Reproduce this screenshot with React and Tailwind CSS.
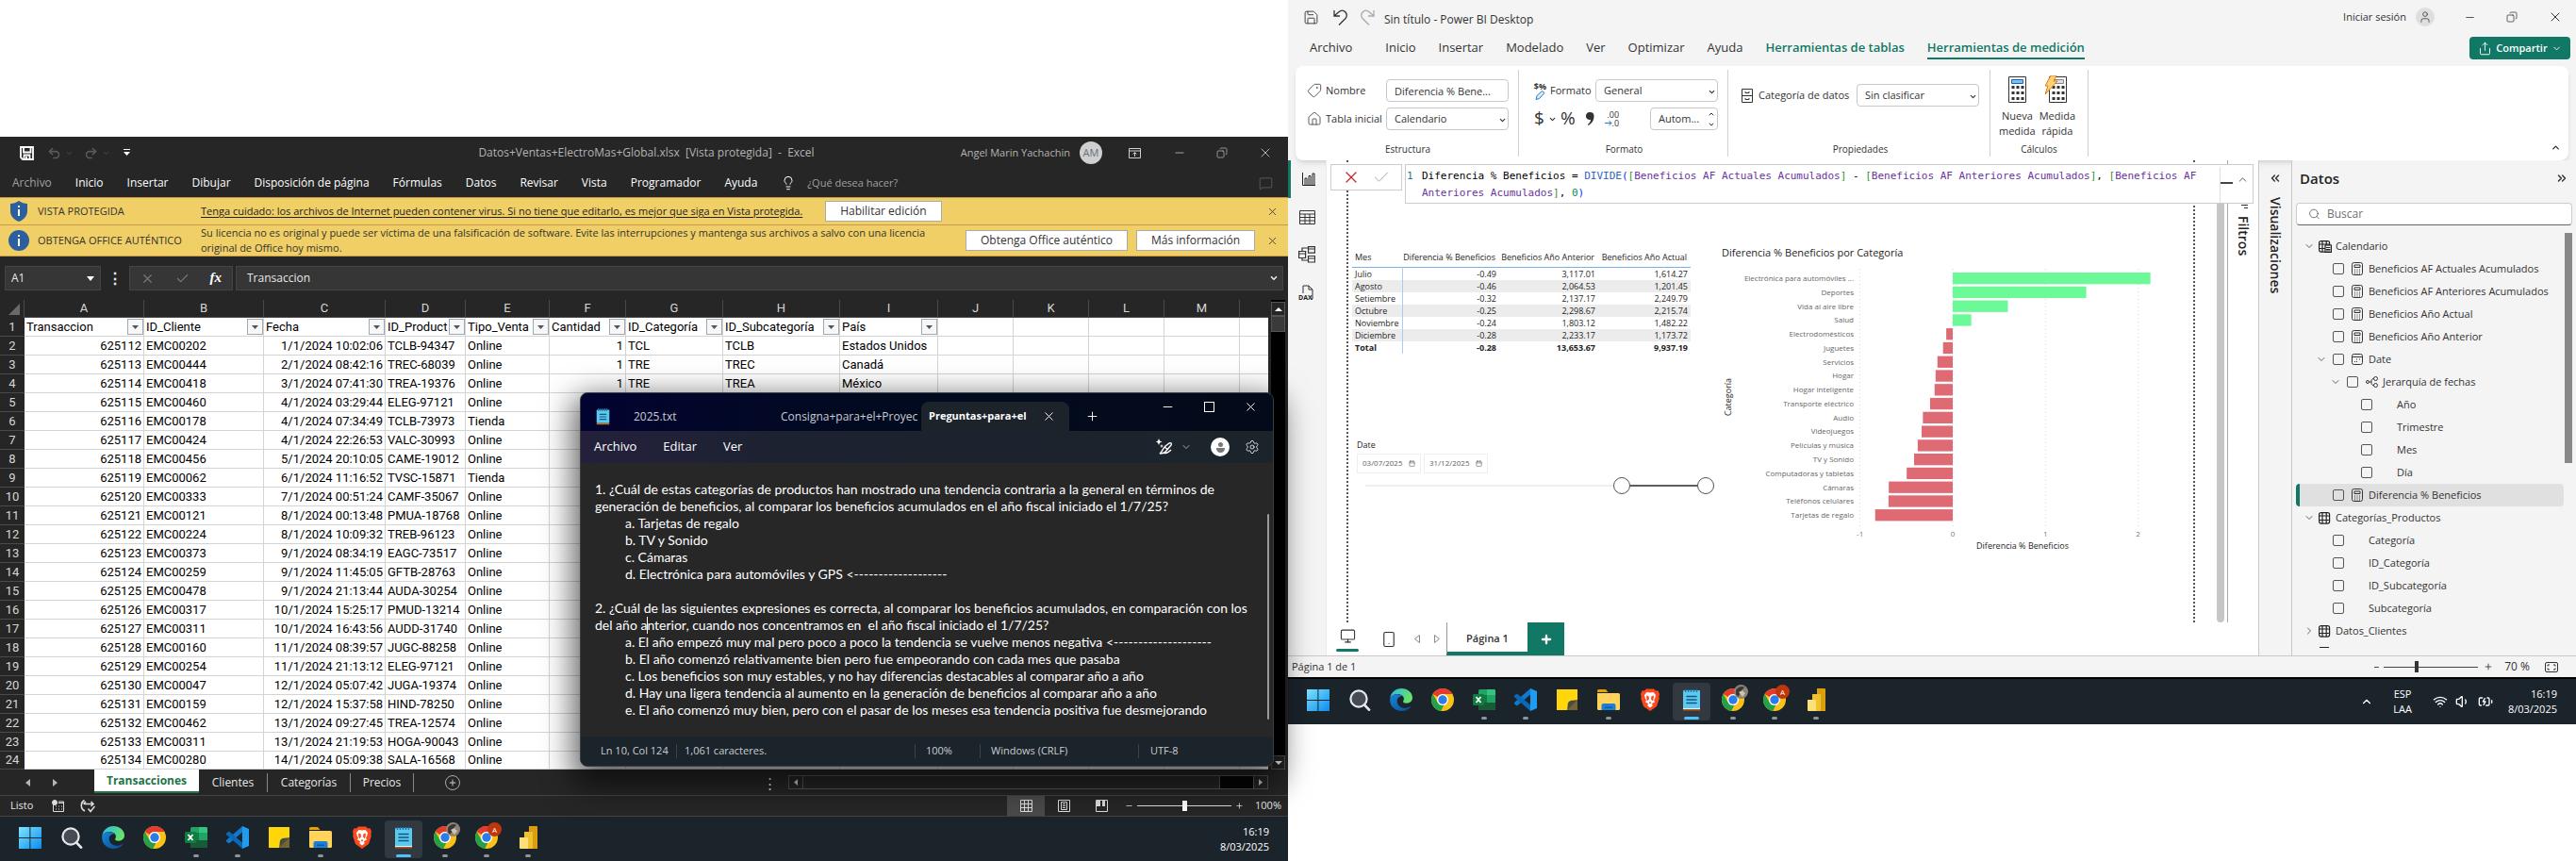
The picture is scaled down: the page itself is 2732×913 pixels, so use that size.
import React from 'react';
import {
  ChevronDown, ChevronUp, ChevronRight, X, Minus, Plus, Search, Save, Undo2, Redo2, Lightbulb,
  MessageSquare, Check, Settings, Home, Tag, Share, Wifi, Volume1, BatteryCharging, Copy,
  ChevronsLeft, ChevronsRight, Monitor, Smartphone, User, Calendar,
} from 'lucide-react';

/* ---------- task bar ---------- */

const svg24 = { width: 24, height: 24, viewBox: '0 0 24 24' };

const WindowsIcon = () => (
  <svg {...svg24}>
    <defs>
      <linearGradient id="win" x1="0" y1="0" x2="1" y2="1">
        <stop offset="0" stopColor="#7ee6ff" />
        <stop offset="1" stopColor="#0a8cf0" />
      </linearGradient>
    </defs>
    <path fill="url(#win)" d="M0 1h11.4v10.9H0zM12.4 1H24v10.9H12.4zM0 12.9h11.4V24H0zM12.4 12.9H24V24H12.4z" />
  </svg>
);

const LensIcon = () => (
  <svg {...svg24}>
    <circle cx="11" cy="11" r="8.6" fill="#464c54" stroke="#e6e8ea" strokeWidth="2.2" />
    <path d="M17.2 17.6 22 22.6" stroke="#e6e8ea" strokeWidth="2.8" strokeLinecap="round" />
  </svg>
);

const EdgeIcon = () => (
  <svg {...svg24}>
    <defs>
      <linearGradient id="edgeTop" x1="0" y1="0" x2="1" y2="0.4">
        <stop offset="0" stopColor="#2cb5ee" />
        <stop offset="1" stopColor="#66e36a" />
      </linearGradient>
      <linearGradient id="edgeLow" x1="0" y1="0" x2="1" y2="1">
        <stop offset="0" stopColor="#1686d9" />
        <stop offset="1" stopColor="#0b4c93" />
      </linearGradient>
    </defs>
    <path fill="url(#edgeTop)" d="M.3 10.5C1 4.200 6 0 12.200 0 19 0 24 4.600 24 9.800c0 3.500-2.700 5.900-6.200 5.900-2.600 0-3.800-.9-3.800-1.700 0-.6.900-1.100.9-2.900 0-2.600-2.700-5-6.600-5C4.200 6.100 1.300 8.200.3 10.500z" />
    <path fill="url(#edgeLow)" d="M.2 11.200C.6 8.300 4 6.200 8 6.200c2.400 0 4.300.8 5.500 2-3.400-.4-5.800 2-5.800 5.300 0 4 3.700 7.300 8.200 7.300 2.500 0 4.500-.8 5.700-1.600.5-.3.900.1.600.6C20.100 22.400 16.400 24 12.300 24 5.300 24-.4 18.300.2 11.200z" />
  </svg>
);

const ChromeIcon = ({ badge }) => (
  <svg {...svg24} className="overflow-visible">
    <circle cx="12" cy="12" r="12" fill="#fbc116" />
    <path fill="#e33b2e" d="M12 0a12 12 0 0 1 10.400 6H12a6 6 0 0 0-5.200 3L1.600 6A12 12 0 0 1 12 0z" />
    <path fill="#24a148" d="M1.600 6l5.200 9A6 6 0 0 0 12 18l1.200-.1-3 6A12 12 0 0 1 1.600 6z" />
    <circle cx="12" cy="12" r="6" fill="#fff" />
    <circle cx="12" cy="12" r="4.700" fill="#2a7de9" />
    {badge === 'letter' && (
      <g>
        <circle cx="20.500" cy="3.500" r="7.500" fill="#bf360c" />
        <text x="20.500" y="6.500" textAnchor="middle" fontSize="8" fill="#fff">A</text>
      </g>
    )}
    {badge === 'photo' && (
      <g>
        <circle cx="20.500" cy="3.500" r="7.500" fill="#8d8478" />
        <path d="M15 2c2-4 7-5 9-3l-3 3 4 2-5 1-3 4-2-3z" fill="#3a3733" />
        <path d="M18 4l4-2 3 3-3 4z" fill="#cdc4b6" />
      </g>
    )}
  </svg>
);

const ExcelIcon = () => (
  <svg {...svg24}>
    <rect x="6" y="1" width="18" height="22" rx="1.500" fill="#21a366" />
    <path fill="#107c41" d="M6 7h9v8H6z" />
    <path fill="#33c481" d="M15 1h7.500A1.500 1.500 0 0 1 24 2.500V7h-9z" />
    <path fill="#185c37" d="M6 15h18v6.500a1.500 1.500 0 0 1-1.500 1.500h-15A1.500 1.500 0 0 1 6 21.500z" />
    <rect x="0" y="6" width="12" height="12" rx="1.200" fill="#107c41" />
    <path d="M3.500 9l5 6M8.500 9l-5 6" stroke="#fff" strokeWidth="1.800" />
  </svg>
);

const CodeIcon = () => (
  <svg {...svg24}>
    <path fill="#1f9cf0" d="M17 0l7 3v18l-7 3z" />
    <path fill="#0f7acc" d="M17 0v6.500L3 18.500 0 16.500v-1.500z" />
    <path fill="#0a68b5" d="M0 7.500 3 5.500l14 12V24L0 9z" />
  </svg>
);

const NotesIcon = () => (
  <svg {...svg24}>
    <path fill="#ffd60a" d="M1 1h22v11l-10 11H1z" />
    <path fill="#4a4a45" d="M23 12v11H12c1-3 0-7 2-9 2-2 6-1 9-2z" />
    <path fill="#f5b800" d="M12 23l11-11v11z" opacity=".25" />
  </svg>
);

const FolderIcon = () => (
  <svg {...svg24}>
    <path fill="#e3a008" d="M0 2.500A1.500 1.500 0 0 1 1.500 1H9l2.500 3H0z" />
    <path fill="#ffd35c" d="M0 5h22.500A1.500 1.500 0 0 1 24 6.500v15a1.500 1.500 0 0 1-1.500 1.500h-21A1.500 1.500 0 0 1 0 21.500z" />
    <path fill="#1b7fd6" d="M4.500 18a2 2 0 0 1 2-2h11a2 2 0 0 1 2 2v5h-15z" />
    <path fill="#0c5ba8" d="M8 19.500h8V21H8z" />
  </svg>
);

const BraveIcon = () => (
  <svg {...svg24}>
    <path fill="#fb4a1f" d="M8 .5h8l2 2 2.500-.3L22 6l-.7 3 .5 1.500L19 19l-7 5-7-5-2.800-8.500L2.700 9 2 6l1.500-3.800L6 2.500z" />
    <path fill="#fff" d="M12 4.500l3.500-.5L18 7l-1 4-1 1.500 1 2-3 1.500.8 2.200L12 20.500l-2.800-2.300L10 16l-3-1.500 1-2L7 11 6 7l2.500-3z" />
    <path fill="#fb4a1f" d="M8 7.500l2.500.8.5 3-1.500 2L8.500 12zM16 7.500l-2.500.8-.5 3 1.500 2 1-1.300zM10.500 15l1.500-.8 1.500.8-1.500 1.500z" />
  </svg>
);

const NotepadIcon = () => (
  <svg {...svg24}>
    <path fill="#e4f4fb" d="M3 20h18v2H3z" />
    <path fill="#b05a1e" d="M3 22h18v1.500H3z" />
    <rect x="3" y="2" width="18" height="19" rx="1" fill="#5cc9f0" />
    <path d="M5.500 1v3M8.500 1v3M11.500 1v3M14.500 1v3M17.500 1v3" stroke="#1c78a8" strokeWidth="1.400" />
    <path d="M7 8.500h10M7 12h10M7 15.500h10" stroke="#12577f" strokeWidth="1.600" strokeLinecap="round" />
  </svg>
);

const PowerBiIcon = () => (
  <svg {...svg24}>
    <path fill="#d99f0c" d="M13 0h8a1 1 0 0 1 1 1v23h-9z" />
    <path fill="#f0c12e" d="M8 6h8a1 1 0 0 1 1 1v17H8z" />
    <path fill="#fbe07a" d="M3 12h8a1 1 0 0 1 1 1v11H4a1 1 0 0 1-1-1z" />
  </svg>
);

const APPS = [
  { name: 'Inicio', icon: <WindowsIcon /> },
  { name: 'Buscar', icon: <LensIcon /> },
  { name: 'Edge', icon: <EdgeIcon /> },
  { name: 'Chrome', icon: <ChromeIcon /> },
  { name: 'Excel', icon: <ExcelIcon />, open: true },
  { name: 'Code', icon: <CodeIcon />, open: true },
  { name: 'Notas', icon: <NotesIcon /> },
  { name: 'Explorador', icon: <FolderIcon />, open: true },
  { name: 'Brave', icon: <BraveIcon /> },
  { name: 'Bloc de notas', icon: <NotepadIcon />, active: true },
  { name: 'Chrome personal', icon: <ChromeIcon badge="photo" />, open: true },
  { name: 'Chrome A', icon: <ChromeIcon badge="letter" />, open: true },
  { name: 'Power BI', icon: <PowerBiIcon />, open: true },
];

function TaskBar({ tray }) {
  return (
    <footer className="flex h-12 items-center bg-[#1b232b] pl-3 pr-5 text-white">
      <nav className="flex gap-1">
        {APPS.map((a) => (
          <button
            key={a.name}
            aria-label={a.name}
            className={`flex h-10 w-10 flex-col items-center justify-end rounded ${a.active ? 'bg-white/10' : ''}`}
          >
            {a.icon}
            <span
              className={`mt-[6px] mb-px h-[3px] rounded-full ${
                a.active ? 'w-4 bg-[#4cc2ff]' : a.open ? 'w-[6px] bg-[#8f9499]' : 'w-[6px]'
              }`}
            />
          </button>
        ))}
      </nav>
      <div className="ml-auto flex items-center text-[11px] leading-4">
        {tray && (
          <>
            <ChevronUp size={14} className="mr-[21px]" />
            <span className="mr-[22px] text-center">ESP<br />LAA</span>
            <div className="mr-4 flex gap-2">
              <Wifi size={16} /><Volume1 size={16} /><BatteryCharging size={16} />
            </div>
          </>
        )}
        <span className="text-right">16:19<br />8/03/2025</span>
      </div>
    </footer>
  );
}

/* ---------- spreadsheet ---------- */

const SHEET_HEAD = ['Transaccion', 'ID_Cliente', 'Fecha', 'ID_Product', 'Tipo_Venta', 'Cantidad', 'ID_Categoría', 'ID_Subcategoría', 'País'];
const SHEET_ROWS = [
  ['625112', 'EMC00202', '1/1/2024 10:02:06', 'TCLB-94347', 'Online', '1', 'TCL', 'TCLB', 'Estados Unidos'],
  ['625113', 'EMC00444', '2/1/2024 08:42:16', 'TREC-68039', 'Online', '1', 'TRE', 'TREC', 'Canadá'],
  ['625114', 'EMC00418', '3/1/2024 07:41:30', 'TREA-19376', 'Online', '1', 'TRE', 'TREA', 'México'],
  ['625115', 'EMC00460', '4/1/2024 03:29:44', 'ELEG-97121', 'Online'],
  ['625116', 'EMC00178', '4/1/2024 07:34:49', 'TCLB-73973', 'Tienda'],
  ['625117', 'EMC00424', '4/1/2024 22:26:53', 'VALC-30993', 'Online'],
  ['625118', 'EMC00456', '5/1/2024 20:10:05', 'CAME-19012', 'Online'],
  ['625119', 'EMC00062', '6/1/2024 11:16:52', 'TVSC-15871', 'Tienda'],
  ['625120', 'EMC00333', '7/1/2024 00:51:24', 'CAMF-35067', 'Online'],
  ['625121', 'EMC00121', '8/1/2024 00:13:48', 'PMUA-18768', 'Online'],
  ['625122', 'EMC00224', '8/1/2024 10:09:32', 'TREB-96123', 'Online'],
  ['625123', 'EMC00373', '9/1/2024 08:34:19', 'EAGC-73517', 'Online'],
  ['625124', 'EMC00259', '9/1/2024 11:45:05', 'GFTB-28763', 'Online'],
  ['625125', 'EMC00478', '9/1/2024 21:13:44', 'AUDA-30254', 'Online'],
  ['625126', 'EMC00317', '10/1/2024 15:25:17', 'PMUD-13214', 'Online'],
  ['625127', 'EMC00311', '10/1/2024 16:43:56', 'AUDD-31740', 'Online'],
  ['625128', 'EMC00160', '11/1/2024 08:39:57', 'JUGC-88258', 'Online'],
  ['625129', 'EMC00254', '11/1/2024 21:13:12', 'ELEG-97121', 'Online'],
  ['625130', 'EMC00047', '12/1/2024 05:07:42', 'JUGA-19374', 'Online'],
  ['625131', 'EMC00159', '12/1/2024 15:37:58', 'HIND-78250', 'Online'],
  ['625132', 'EMC00462', '13/1/2024 09:27:45', 'TREA-12574', 'Online'],
  ['625133', 'EMC00311', '13/1/2024 21:19:53', 'HOGA-90043', 'Online'],
  ['625134', 'EMC00280', '14/1/2024 05:09:38', 'SALA-16568', 'Online'],
];
const LETTERS = 'ABCDEFGHIJKLM'.split('');
const RIGHT_ALIGNED = [0, 2, 5];

function Sheet() {
  return (
    <table className="w-full table-fixed border-separate border-spacing-0 bg-white font-['Roboto',sans-serif] text-[13px] leading-[18px] text-black">
      <colgroup>
        <col className="w-[26px]" />
        <col className="w-[127px]" />
        <col className="w-[127px]" />
        <col className="w-[129px]" />
        <col className="w-[85px]" />
        <col className="w-[89px]" />
        <col className="w-[81px]" />
        <col className="w-[103px]" />
        <col className="w-[124px]" />
        <col className="w-[104px]" />
        <col className="w-[80px]" />
        <col className="w-[80px]" />
        <col className="w-[80px]" />
        <col className="w-[80px]" />
        <col />
      </colgroup>
      <thead>
        <tr className="h-[19px] bg-[#262626] text-[#d6d6d6]">
          <th className="border-r border-[#4a4a4a] p-0">
            <svg width="12" height="12" viewBox="0 0 12 12" className="ml-auto mr-1"><path d="M12 0v12H0z" fill="#6a6a6a" /></svg>
          </th>
          {LETTERS.map((l) => <th key={l} className="border-r border-b border-[#4a4a4a] p-0 font-normal">{l}</th>)}
          <th className="border-b border-[#4a4a4a] p-0" />
        </tr>
      </thead>
      <tbody>
        <tr className="h-5">
          <th className="border-b border-[#4a4a4a] bg-[#262626] p-0 font-normal text-[#d6d6d6]">1</th>
          {LETTERS.map((l, i) => (
            <td key={l} className="border-r border-b border-[#d4d4d4] p-0">
              {SHEET_HEAD[i] && (
                <div className="flex items-center pl-0.5 whitespace-nowrap">
                  <span className="min-w-0 flex-1">{SHEET_HEAD[i]}</span>
                  <button aria-label={`Filtrar ${SHEET_HEAD[i]}`} className="flex h-[17px] w-[17px] shrink-0 items-center justify-center border border-[#a3a8b0] bg-[#f6f7f9]">
                    <svg width="7" height="4" viewBox="0 0 7 4"><path d="M0 0h7L3.500 4z" fill="#555" /></svg>
                  </button>
                </div>
              )}
            </td>
          ))}
          <td className="border-b border-[#d4d4d4] p-0" />
        </tr>
        {SHEET_ROWS.map((row, r) => (
          <tr key={row[0]} className={r === SHEET_ROWS.length - 1 ? 'h-[18px]' : 'h-5'}>
            <th className="border-b border-[#4a4a4a] bg-[#262626] p-0 font-normal text-[#d6d6d6]">{r + 2}</th>
            {LETTERS.map((l, i) => (
              <td key={l} className={`border-r border-b border-[#d4d4d4] px-0.5 py-0 whitespace-nowrap ${RIGHT_ALIGNED.includes(i) ? 'text-right' : ''}`}>
                {row[i]}
              </td>
            ))}
            <td className="border-b border-[#d4d4d4] p-0" />
          </tr>
        ))}
      </tbody>
    </table>
  );
}

const BannerButton = ({ children }) => (
  <button className="h-[22px] shrink-0 border border-[#ababab] bg-white px-[15px] text-xs leading-5 whitespace-nowrap text-[#333]">{children}</button>
);

function Notepad() {
  return (
    <section className="absolute top-[271px] right-[15px] left-[615px] overflow-hidden rounded-lg border border-[#3a3f46] bg-[#272727] text-xs text-white shadow-[0_12px_32px_8px_rgba(0,0,0,0.6)]">
      <header className="flex h-10 items-end bg-linear-to-r from-[#030330] via-[#020a20] via-40% to-[#030b1a] pl-4">
        <svg width="15" height="18" viewBox="3 0 18 24" className="mb-[6px]">
          <rect x="3" y="2" width="18" height="19" rx="1" fill="#5cc9f0" />
          <path d="M3 21h18v2H3z" fill="#c96a1e" />
          <path d="M5.500 0v4M8.500 0v4M11.500 0v4M14.500 0v4M17.500 0v4" stroke="#1c78a8" strokeWidth="1.400" />
          <path d="M7 8.500h10M7 12h10M7 15.500h10" stroke="#12577f" strokeWidth="1.600" />
        </svg>
        <button className="ml-[25px] h-[30px] w-[148px] text-left text-[#c8ccd4]">2025.txt</button>
        <button className="h-[30px] w-[157px] overflow-hidden pl-2 text-left whitespace-nowrap text-[#c8ccd4]">Consigna+para+el+Proyec</button>
        <div className="flex h-[31px] w-[157px] items-center rounded-t-lg bg-[#1d232b] pr-[14px] pl-2">
          <button className="text-[11px] font-bold whitespace-nowrap">Preguntas+para+el</button>
          <button aria-label="Cerrar pestaña" className="ml-auto"><X size={15} strokeWidth={1.500} /></button>
        </div>
        <button aria-label="Nueva pestaña" className="mb-2 ml-[17px]"><Plus size={15} strokeWidth={1.500} /></button>
        <div className="mr-4 mb-[18px] ml-auto flex gap-[31px]">
          <button aria-label="Minimizar"><Minus size={15} strokeWidth={1.500} /></button>
          <button aria-label="Maximizar" className="my-0.5 h-[11px] w-[11px] border border-white" />
          <button aria-label="Cerrar"><X size={15} strokeWidth={1.500} /></button>
        </div>
      </header>
      <nav className="flex h-[34px] items-center bg-linear-to-r from-[#24203c] via-[#1c2230] via-30% to-[#1c242b] px-[14px] text-[13px]">
        <button>Archivo</button>
        <button className="ml-7">Editar</button>
        <button className="ml-7">Ver</button>
        <button aria-label="Reescribir" className="ml-auto">
          <svg width="18" height="18" viewBox="0 0 18 18" fill="none" stroke="#fff" strokeWidth="1.400">
            <path d="M4 16c2-1 3-5 6-8l4-3c2-1 3 0 2 2l-6 7c-2 2-4 2-6 2zM9 9l4 3M8 15c2 1 5 0 8-3" />
            <path d="M3 0l1 2.500L6.500 3.500 4 4.500 3 7 2 4.500 0 3.500 2 2.500zM6 6l.6 1.400L8 8l-1.400.6L6 10l-.6-1.400L4 8l1.400-.6z" fill="#fff" stroke="none" />
          </svg>
        </button>
        <ChevronDown size={12} className="ml-2 text-[#a5a9ad]" />
        <button aria-label="Cuenta" className="ml-5 flex h-5 w-5 flex-col items-center justify-center rounded-full bg-white">
          <span className="h-[5px] w-[5px] rounded-full bg-[#777]" />
          <span className="mt-px h-[5px] w-[9px] rounded-b-full bg-[#777]" />
        </button>
        <button aria-label="Configuración" className="ml-4"><Settings size={16} strokeWidth={1.200} /></button>
      </nav>
      <div className="flex h-[290px] justify-between pr-1 pl-[15px] font-['Lato',sans-serif] text-[14px] leading-[18px]">
        <div className="pt-[19px] whitespace-pre">
          <p>1. ¿Cuál de estas categorías de productos han mostrado una tendencia contraria a la general en términos de</p>
          <p>generación de beneficios, al comparar los beneficios acumulados en el año fiscal iniciado el 1/7/25?</p>
          <ol className="pl-8">
            <li>a. Tarjetas de regalo</li>
            <li>b. TV y Sonido</li>
            <li>c. Cámaras</li>
            <li>d. Electrónica para automóviles y GPS &lt;-------------------</li>
          </ol>
          <p className="mt-[18px]">2. ¿Cuál de las siguientes expresiones es correcta, al comparar los beneficios acumulados, en comparación con los</p>
          <p>del año a<span className="absolute h-[18px] w-px bg-white" />nterior, cuando nos concentramos en  el año fiscal iniciado el 1/7/25?</p>
          <ol className="pl-8">
            <li>a. El año empezó muy mal pero poco a poco la tendencia se vuelve menos negativa &lt;--------------------</li>
            <li>b. El año comenzó relativamente bien pero fue empeorando con cada mes que pasaba</li>
            <li>c. Los beneficios son muy estables, y no hay diferencias destacables al comparar año a año</li>
            <li>d. Hay una ligera tendencia al aumento en la generación de beneficios al comparar año a año</li>
            <li>e. El año comenzó muy bien, pero con el pasar de los meses esa tendencia positiva fue desmejorando</li>
          </ol>
        </div>
        <span className="mt-[54px] h-[218px] w-0.5 rounded bg-[#9a9a9a]" />
      </div>
      <footer className="flex h-[31px] items-center bg-[#1b232b] pl-[21px] text-[11px] text-[#c9ced3]">
        <span className="w-20">Ln 10, Col 124</span>
        <span className="flex-1 border-l border-[#3a424a] pl-2">1,061 caracteres.</span>
        <span className="w-[69px] border-l border-[#3a424a] pl-[11px]">100%</span>
        <span className="w-[168px] border-l border-[#3a424a] pl-[11px]">Windows (CRLF)</span>
        <span className="w-[143px] border-l border-[#3a424a] pl-3">UTF-8</span>
      </footer>
    </section>
  );
}

const EXCEL_MENU = ['Inicio', 'Insertar', 'Dibujar', 'Disposición de página', 'Fórmulas', 'Datos', 'Revisar', 'Vista', 'Programador', 'Ayuda'];

function Excel() {
  return (
    <section className="relative bg-[#262626] text-xs text-[#e8e8e8]">
      <header className="grid h-[34px] grid-cols-[1fr_auto_1fr] items-center pr-4 pl-[21px] text-[#b4b4b4]">
        <div className="flex items-center">
          <svg width="15" height="15" viewBox="0 0 15 15" fill="none" stroke="#fff" strokeWidth="1.800"><path d="M1 1h13v13H3l-2-2zM4 1v5.500h7.500V1M4.500 14V9.500h6V14" /><path d="M6 11h2v3H6z" fill="#fff" stroke="none" /></svg>
          <Undo2 size={15} strokeWidth={2.500} className="ml-[14px] text-[#5a5a5a]" />
          <ChevronDown size={9} className="ml-1 text-[#5a5a5a]" />
          <Redo2 size={15} strokeWidth={2.500} className="ml-[11px] text-[#5a5a5a]" />
          <ChevronDown size={9} className="ml-1 text-[#5a5a5a]" />
          <svg width="7" height="8" viewBox="0 0 7 8" className="ml-[14px]"><path d="M0 0h7v1H0zM0 3h7L3.500 7z" fill="#fff" /></svg>
        </div>
        <h1 className="whitespace-pre">Datos+Ventas+ElectroMas+Global.xlsx  [Vista protegida]  -  Excel</h1>
        <div className="flex items-center justify-end">
          <span className="text-[11px]">Angel Marin Yachachin</span>
          <span className="ml-[10px] flex h-6 w-6 items-center justify-center rounded-full bg-[#cfcfcf] text-[11px] text-[#6b6f80]">AM</span>
          <svg width="13" height="11" viewBox="0 0 13 11" className="ml-7" fill="none" stroke="#cfcfcf"><path d="M.5.5h12v10H.5zM.5 3h12M6.500 9V5M4.500 6.500l2-2 2 2" /></svg>
          <button aria-label="Minimizar" className="ml-[34px]"><Minus size={14} strokeWidth={1.500} /></button>
          <button aria-label="Restaurar" className="ml-8"><Copy size={12} strokeWidth={1.500} className="-scale-x-100" /></button>
          <button aria-label="Cerrar" className="ml-8"><X size={16} strokeWidth={1.500} /></button>
        </div>
      </header>
      <nav className="flex h-[30px] items-center gap-[25px] pr-4 pl-[13px] text-white">
        <button className="text-[#a0a0a0]">Archivo</button>
        {EXCEL_MENU.map((m) => <button key={m} className="whitespace-nowrap">{m}</button>)}
        <button className="flex items-center gap-3 text-[11px] text-[#a0a0a0]"><Lightbulb size={16} strokeWidth={1.500} className="text-white" />¿Qué desea hacer?</button>
        <MessageSquare size={15} className="ml-auto text-[#4d4d4d]" />
      </nav>
      <div className="flex h-[29px] items-center border-t border-[#c99a4c] bg-[#efcf66] pr-[10px] pl-[10px] text-[11px] text-[#333]">
        <svg width="20" height="22" viewBox="0 0 20 22"><path d="M10 0c3 2 6 3 9 3v8c0 5-4 9-9 11C5 20 1 16 1 11V3c3 0 6-1 9-3z" fill="#2b5f9e" /><path d="M10 9v7M10 5v2" stroke="#fff" strokeWidth="2" /></svg>
        <strong className="ml-[10px] w-[173px] font-normal">VISTA PROTEGIDA</strong>
        <a href="#protegida" className="mr-6 whitespace-nowrap text-[#222] underline underline-offset-2">Tenga cuidado: los archivos de Internet pueden contener virus. Si no tiene que editarlo, es mejor que siga en Vista protegida.</a>
        <BannerButton>Habilitar edición</BannerButton>
        <button aria-label="Cerrar aviso" className="ml-auto"><X size={13} strokeWidth={1.500} /></button>
      </div>
      <div className="flex h-[34px] items-center border-y border-[#c99a4c] bg-[#efcf66] pr-[10px] pl-[9px] text-[11px] text-[#333]">
        <svg width="22" height="22" viewBox="0 0 22 22"><circle cx="11" cy="11" r="11" fill="#2b5f9e" /><path d="M11 9v8M11 5v2" stroke="#fff" strokeWidth="2" /></svg>
        <strong className="ml-[9px] w-[173px] font-normal whitespace-nowrap">OBTENGA OFFICE AUTÉNTICO</strong>
        <p className="flex-1 leading-4 whitespace-nowrap">
          Su licencia no es original y puede ser víctima de una falsificación de software. Evite las interrupciones y mantenga sus archivos a salvo con una licencia
          <br />original de Office hoy mismo.
        </p>
        <div className="mr-[12px] flex gap-[9px]">
          <BannerButton>Obtenga Office auténtico</BannerButton>
          <BannerButton>Más información</BannerButton>
        </div>
        <button aria-label="Cerrar aviso"><X size={13} strokeWidth={1.500} /></button>
      </div>
      <div className="flex h-[46px] items-center pr-[5px] pl-[5px]">
        <button className="flex h-[26px] w-[102px] items-center justify-between border border-[#444] bg-[#363636] px-[6px] text-xs">
          A1<svg width="8" height="5" viewBox="0 0 8 5"><path d="M0 0h8L4 5z" fill="#fff" /></svg>
        </button>
        <span className="w-[30px] text-center text-base font-bold">⋮</span>
        <div className="flex h-[26px] w-[110px] items-center justify-around border border-[#444] bg-[#363636] text-[#777]">
          <X size={15} /><Check size={15} />
          <i className="font-['Liberation_Serif',serif] text-[15px] font-bold text-white">fx</i>
        </div>
        <div className="ml-[3px] flex h-[26px] flex-1 items-center border border-[#444] bg-[#363636] pr-1">
          <input aria-label="Barra de fórmulas" defaultValue="Transaccion" className="flex-1 bg-transparent pl-[11px] text-xs outline-none" />
          <ChevronDown size={10} strokeWidth={4} />
        </div>
      </div>
      <div className="flex pr-[3px]">
        <div className="min-w-0 flex-1"><Sheet /></div>
        <div className="ml-[3px] flex w-[15px] flex-col bg-black pt-0.5">
          <button aria-label="Subir" className="flex h-[15px] items-center justify-center border border-[#555] bg-[#262626]"><svg width="8" height="4" viewBox="0 0 8 4"><path d="M4 0l4 4H0z" fill="#fff" /></svg></button>
          <span className="h-[17px] border border-[#555] bg-[#3a3a3a]" />
          <button aria-label="Bajar" className="mt-auto flex h-[15px] items-center justify-center border border-[#555] bg-[#262626]"><svg width="8" height="4" viewBox="0 0 8 4"><path d="M4 4l4-4H0z" fill="#fff" /></svg></button>
        </div>
      </div>
      <div className="flex h-7 items-center border-b border-[#444] pr-[21px] pl-[27px]">
        <svg width="5" height="8" viewBox="0 0 5 8"><path d="M5 0v8L0 4z" fill="#b5b5b5" /></svg>
        <svg width="5" height="8" viewBox="0 0 5 8" className="ml-6"><path d="M0 0v8l5-4z" fill="#b5b5b5" /></svg>
        <button className="ml-[39px] h-[25px] w-[111px] self-start border-b-2 border-[#217346] bg-white text-xs font-bold text-[#217346]">Transacciones</button>
        <button className="h-5 w-[73px] border-r border-[#888]">Clientes</button>
        <button className="h-5 w-[88px] border-r border-[#888]">Categorías</button>
        <button className="h-5 w-[67px] border-r border-[#888]">Precios</button>
        <button aria-label="Nueva hoja" className="ml-[33px] flex h-4 w-4 items-center justify-center rounded-full border border-[#aaa]"><Plus size={10} /></button>
        <span className="ml-auto text-[15px]">⋮</span>
        <div className="ml-3 flex h-[15px] w-[509px] border border-[#555] bg-[#060606]">
          <span className="flex w-[15px] items-center justify-center border-r border-[#555] bg-[#262626]"><svg width="4" height="7" viewBox="0 0 4 7"><path d="M4 0v7L0 3.500z" fill="#ccc" /></svg></span>
          <span className="w-[442px] border-r border-[#555] bg-[#262626]" />
          <span className="ml-auto flex w-[15px] items-center justify-center border-l border-[#555] bg-[#262626]"><svg width="4" height="7" viewBox="0 0 4 7"><path d="M0 0v7l4-3.500z" fill="#ccc" /></svg></span>
        </div>
      </div>
      <div className="flex h-[22px] items-center border-b border-[#444] pr-[7px] pl-[11px]">
        <span className="text-[11px]">Listo</span>
        <svg width="13" height="13" viewBox="0 0 13 13" className="ml-5" fill="none" stroke="#ddd"><path d="M1.500 5v7.500h11V2H7M4 7h1M7 7h1M10 7h1M4 10h1M7 10h1M10 10h1M7 3.500h5" /><circle cx="3" cy="3" r="2.500" fill="#ddd" /></svg>
        <svg width="16" height="15" viewBox="0 0 16 15" className="ml-[17px]" fill="none" stroke="#ddd" strokeWidth="1.500"><path d="M4.500 1.500A6.500 6.500 0 0 0 5 13M4 5.500h9.500M11.500 3l2.500 2.500L11.500 8M6 3L3.500 5.500M8.500 10.500l2.500 3 4.500-5.500" /></svg>
        <div className="ml-auto flex h-full items-center">
          <button aria-label="Normal" className="flex h-full w-10 items-center justify-center bg-[#4a4a4a]"><svg width="13" height="13" viewBox="0 0 13 13" fill="none" stroke="#ddd"><path d="M.5.5h12v12H.5zM.5 4.500h12M.5 8.500h12M4.500.5v12M8.500.5v12" /></svg></button>
          <button aria-label="Diseño" className="flex w-10 justify-center"><svg width="13" height="13" viewBox="0 0 13 13" fill="none" stroke="#ddd"><path d="M.5.5h12v12H.5zM3.500 2.500h6v8h-6zM5 4.500h3M5 6.500h3M5 8.500h3" /></svg></button>
          <button aria-label="Saltos" className="flex w-10 justify-center"><svg width="13" height="13" viewBox="0 0 13 13" fill="none" stroke="#ddd"><path d="M.5.5h12v12H.5z" /><path d="M1 1h4v6H1zM7 1h3v6H7z" fill="#ddd" stroke="none" /></svg></button>
          <Minus size={9} className="ml-[5px]" />
          <input type="range" aria-label="Zoom" defaultValue="50" className="mx-1 h-px w-[100px] appearance-none bg-[#ddd] [&::-webkit-slider-thumb]:h-[11px] [&::-webkit-slider-thumb]:w-[5px] [&::-webkit-slider-thumb]:appearance-none [&::-webkit-slider-thumb]:bg-white" />
          <Plus size={9} />
          <span className="ml-3 text-[11px]">100%</span>
        </div>
      </div>
      <Notepad />
    </section>
  );
}

/* ---------- report editor ---------- */

const MONTHS = [
  ['Julio', '-0.49', '3,117.01', '1,614.27'],
  ['Agosto', '-0.46', '2,064.53', '1,201.45'],
  ['Setiembre', '-0.32', '2,137.17', '2,249.79'],
  ['Octubre', '-0.25', '2,298.67', '2,215.74'],
  ['Noviembre', '-0.24', '1,803.12', '1,482.22'],
  ['Diciembre', '-0.28', '2,233.17', '1,173.72'],
];

const BARS = [
  ['Electrónica para automóviles ...', 2.133], ['Deportes', 1.44], ['Vida al aire libre', 0.595], ['Salud', 0.2],
  ['Electrodomésticos', -0.07], ['Juguetes', -0.105], ['Servicios', -0.165], ['Hogar', -0.185],
  ['Hogar inteligente', -0.196], ['Transporte eléctrico', -0.245], ['Audio', -0.322], ['Videojuegos', -0.336],
  ['Películas y música', -0.378], ['TV y Sonido', -0.417], ['Computadoras y tabletas', -0.497],
  ['Cámaras', -0.69], ['Teléfonos celulares', -0.693], ['Tarjetas de regalo', -0.837],
];

function MonthTable() {
  return (
    <table className="w-[359px] table-fixed border-collapse text-[9px] leading-[13px] text-[#252423]">
      <colgroup><col className="w-[53px]" /><col className="w-[103px]" /><col className="w-[105px]" /><col /></colgroup>
      <thead>
        <tr className="h-[21px] border-b border-[#74b3ec] text-right whitespace-nowrap">
          <th className="p-0 pl-[3px] text-left font-normal">Mes</th>
          <th className="p-0 pr-1 font-normal">Diferencia % Beneficios</th>
          <th className="p-0 pr-1 font-normal">Beneficios Año Anterior</th>
          <th className="p-0 pr-1 font-normal">Beneficios Año Actual</th>
        </tr>
      </thead>
      <tbody>
        {MONTHS.map((m, i) => (
          <tr key={m[0]} className={`text-right ${i % 2 ? 'bg-[#ececec]' : ''}`}>
            <td className="border-r border-[#a9cdf0] p-0 pl-[3px] text-left">{m[0]}</td>
            {m.slice(1).map((v) => <td key={v} className="p-0 pr-[3px]">{v}</td>)}
          </tr>
        ))}
        <tr className="text-right font-bold">
          <td className="border-r border-[#a9cdf0] p-0 pl-[3px] text-left">Total</td>
          <td className="p-0 pr-[3px]">-0.28</td><td className="p-0 pr-[3px]">13,653.67</td><td className="p-0 pr-[3px]">9,937.19</td>
        </tr>
      </tbody>
    </table>
  );
}

function BarChart() {
  const zero = 251;
  const unit = 98.3;
  return (
    <svg width="500" height="335" viewBox="0 0 500 335" role="img" aria-label="Diferencia % Beneficios por Categoría">
      <text x="6" y="17" fontSize="11" fill="#252423">Diferencia % Beneficios por Categoría</text>
      {[-1, 0, 1, 2].map((t) => (
        <g key={t}>
          <line x1={zero + t * unit} x2={zero + t * unit} y1="30" y2="304" stroke="#d5d5d5" strokeDasharray="1 3" />
          <text x={zero + t * unit} y="314" fontSize="8" textAnchor="middle" fill="#777">{t}</text>
        </g>
      ))}
      {BARS.map(([name, v], i) => (
        <g key={name}>
          <text x="146" y={43 + i * 14.77} fontSize="8" textAnchor="end" fill="#666">{name}</text>
          <rect x={v < 0 ? zero + v * unit : zero} y={34 + i * 14.77} width={Math.abs(v) * unit} height="12.300" fill={v < 0 ? '#de6a73' : '#6cf998'} />
        </g>
      ))}
      <text x="325" y="327" fontSize="9" textAnchor="middle" fill="#252423">Diferencia % Beneficios</text>
      <text transform="translate(16 166) rotate(-90)" fontSize="9" textAnchor="middle" fill="#252423">Categoría</text>
    </svg>
  );
}

const DateBox = ({ value, label }) => (
  <label className="flex h-[21px] w-[68px] items-center border border-[#eee] px-[5px] text-[#605e5c]">
    <input aria-label={label} defaultValue={value} className="w-12 bg-transparent text-[8px] outline-none" />
    <Calendar size={7} className="ml-auto" />
  </label>
);

const thumb = '[&::-webkit-slider-thumb]:h-[18px] [&::-webkit-slider-thumb]:w-[18px] [&::-webkit-slider-thumb]:appearance-none [&::-webkit-slider-thumb]:rounded-full [&::-webkit-slider-thumb]:border [&::-webkit-slider-thumb]:border-[#555] [&::-webkit-slider-thumb]:bg-white';

function Slicer() {
  return (
    <div className="mt-[90px] pl-[5px]">
      <p className="text-[9px] leading-[14px] text-[#252423]">Date</p>
      <div className="mt-0.5 flex gap-[3px]">
        <DateBox label="Desde" value="03/07/2025" />
        <DateBox label="Hasta" value="31/12/2025" />
      </div>
      <div className="relative mt-1 ml-[9px] grid h-[18px] w-[370px] items-center">
        <span className="col-start-1 row-start-1 h-0.5 bg-[#efefef]" />
        <span className="col-start-1 row-start-1 ml-[272px] h-0.5 bg-[#605e5c]" />
        <input type="range" aria-label="Fecha inicial" max="1000" defaultValue="746" className={`relative col-start-1 row-start-1 h-[18px] w-full appearance-none bg-transparent ${thumb}`} />
        <input type="range" aria-label="Fecha final" max="1000" defaultValue="1000" className={`relative col-start-1 row-start-1 h-[18px] w-full appearance-none bg-transparent ${thumb}`} />
      </div>
    </div>
  );
}

const TABLES = [
  { t: 'table', name: 'Calendario', open: true, calc: true },
  { t: 'field', name: 'Beneficios AF Actuales Acumulados', icon: 'calc', level: 1 },
  { t: 'field', name: 'Beneficios AF Anteriores Acumulados', icon: 'calc', level: 1 },
  { t: 'field', name: 'Beneficios Año Actual', icon: 'calc', level: 1 },
  { t: 'field', name: 'Beneficios Año Anterior', icon: 'calc', level: 1 },
  { t: 'field', name: 'Date', icon: 'date', level: 1, open: true },
  { t: 'field', name: 'Jerarquía de fechas', icon: 'tree', level: 2, open: true },
  { t: 'field', name: 'Año', level: 3 },
  { t: 'field', name: 'Trimestre', level: 3 },
  { t: 'field', name: 'Mes', level: 3 },
  { t: 'field', name: 'Día', level: 3 },
  { t: 'field', name: 'Diferencia % Beneficios', icon: 'calc', level: 1, selected: true },
  { t: 'table', name: 'Categorías_Productos', open: true },
  { t: 'field', name: 'Categoría', level: 1 },
  { t: 'field', name: 'ID_Categoría', level: 1 },
  { t: 'field', name: 'ID_Subcategoría', level: 1 },
  { t: 'field', name: 'Subcategoría', level: 1 },
  { t: 'table', name: 'Datos_Clientes' },
];
const INDENT = { 1: 'pl-[21px]', 2: 'pl-[36px]', 3: 'pl-[51px]' };

const CalcIcon = () => (
  <svg width="12" height="14" viewBox="0 0 12 14" fill="none" stroke="#333">
    <rect x=".5" y=".5" width="11" height="13" rx="2" /><path d="M3 3h6v2.500H3z" />
    <path d="M3 8h1M5.500 8h1M8 8h1M3 10h1M5.500 10h1M8 10h1M3 12h1M5.500 12h1M8 12h1" />
  </svg>
);
const DateIcon = () => (
  <svg width="12" height="12" viewBox="0 0 12 12" fill="none" stroke="#333">
    <rect x=".5" y=".5" width="11" height="11" rx="2" /><path d="M.5 3.500h11M5 6h1M8 6h1M3 8.500h1M5 8.500h1" />
  </svg>
);
const TreeIcon = () => (
  <svg width="13" height="12" viewBox="0 0 13 12" fill="none" stroke="#333">
    <circle cx="2" cy="6" r="1.500" /><circle cx="10.500" cy="2.500" r="2" /><circle cx="10.500" cy="9.500" r="2" /><path d="M3.500 6H6M8.500 2.500C6 2.500 6 4 6 6s0 3.500 2.500 3.500" />
  </svg>
);
const TableIcon = ({ calc }) => (
  <svg width="14" height="13" viewBox="0 0 14 13" fill="none" stroke="#222" strokeWidth="1.200">
    <rect x=".6" y=".6" width="11" height="11.500" rx="2" /><path d="M.6 4h11M.6 8.500h11M4 .6v11.500M8.200.6v11.500" />
    {calc && <><rect x="7" y="5" width="6.500" height="7.500" fill="#f4f4f4" /><path d="M8 7.500h4.500M8 9.500h4.500M8 11h4.500" /></>}
  </svg>
);
const FIELD_ICONS = { calc: <CalcIcon />, date: <DateIcon />, tree: <TreeIcon /> };

function DataPane() {
  return (
    <aside className="w-[302px] shrink-0 border-l border-[#c8c8c8] bg-[#f4f4f4] pr-1 pl-1">
      <header className="flex h-[38px] items-center justify-between pr-1 pl-1">
        <h2 className="text-[15px] font-semibold text-[#222]">Datos</h2>
        <button aria-label="Contraer"><ChevronsRight size={14} strokeWidth={2.500} /></button>
      </header>
      <label className="mt-[7px] flex h-6 items-center rounded border border-[#ccc] border-b-[#666] bg-white pl-3">
        <Search size={14} strokeWidth={1.500} className="text-[#555]" />
        <input placeholder="Buscar" aria-label="Buscar" className="ml-[7px] w-full bg-transparent text-xs outline-none placeholder:text-[#707070]" />
      </label>
      <div className="mt-[8px] flex">
        <ul className="flex-1 pt-0.5 text-[11px] text-[#333]">
          {TABLES.map((n) => (
            <li key={n.name + n.t} className={`mr-px flex h-6 items-center whitespace-nowrap ${n.selected ? 'rounded border-l-4 border-[#117865] bg-[#e0e0e0]' : ''}`}>
              {n.t === 'table' ? (
                <button className="flex items-center pl-2">
                  {n.open ? <ChevronDown size={12} strokeWidth={1.500} /> : <ChevronRight size={12} strokeWidth={1.500} />}
                  <span className="ml-1 w-[18px]"><TableIcon calc={n.calc} /></span>
                  {n.name}
                </button>
              ) : (
                <label className={`flex items-center ${n.selected ? 'pl-[17px]' : INDENT[n.level]}`}>
                  <span className="w-[18px]">{n.open && <ChevronDown size={12} strokeWidth={1.500} />}</span>
                  <input type="checkbox" className="h-3 w-3 appearance-none rounded-xs border border-[#555]" />
                  <span className="ml-2 w-[18px]">{FIELD_ICONS[n.icon]}</span>
                  {n.name}
                </label>
              )}
            </li>
          ))}
        </ul>
        <span className="h-[244px] w-2 bg-[#8a8886]" />
      </div>
      <span className="mt-[5px] ml-[25px] block h-px w-[10px] bg-[#222]" />
    </aside>
  );
}

const Picker = ({ label, value, className }) => (
  <span className={`relative flex ${className}`}>
    <select aria-label={label} className="h-6 w-full appearance-none rounded border border-[#c8c8c8] bg-white px-2 text-[11px] text-[#333]"><option>{value}</option></select>
    <ChevronDown size={9} strokeWidth={3} className="absolute top-[9px] right-0.5" />
  </span>
);

const Group = ({ title, className, children }) => (
  <div className={`flex flex-col border-r border-[#d0d0d0] ${className}`}>
    <div className="flex-1">{children}</div>
    <p className="pb-px text-center text-[10px] leading-[14px]">{title}</p>
  </div>
);

const CalculatorBig = ({ quick }) => (
  <svg width="26" height="30" viewBox="0 0 26 30" fill="none">
    <path d="M4.500 1.500h18v27h-18z" stroke="#333" fill="#fff" />
    <path d="M7.500 4.500h12v4h-12z" stroke={quick ? '#888' : '#1267b4'} fill={quick ? '#ddd' : '#83beec'} />
    <path d="M7.500 12.500h13M7.500 18.500h13M7.500 24.500h13" stroke="#333" strokeWidth="3" strokeDasharray="3 2" />
    {quick && <path d="M6 0h6L9 6h4L0 20l3-9H0z" fill="#ffd27a" stroke="#e07a10" />}
  </svg>
);

const PBI_MENU = ['Inicio', 'Insertar', 'Modelado', 'Ver', 'Optimizar', 'Ayuda'];

function Ribbon() {
  return (
    <div className="mr-2 ml-2 flex h-[100px] rounded-lg bg-white py-1 pl-3 text-xs text-[#333] shadow-md">
      <Group title="Estructura" className="w-[225px] pr-[10px]">
        <div className="mt-[10px] flex items-center text-[11px]">
          <Tag size={16} strokeWidth={1.200} className="-scale-x-100" />
          <label htmlFor="nombre" className="ml-1 w-[64px] whitespace-nowrap">Nombre</label>
          <input id="nombre" defaultValue="Diferencia % Bene..." className="h-6 w-[130px] rounded border border-[#c8c8c8] px-2" />
        </div>
        <div className="mt-[6px] flex items-center text-[11px]">
          <Home size={16} strokeWidth={1.200} />
          <span className="ml-1 w-[64px] whitespace-nowrap">Tabla inicial</span>
          <Picker label="Tabla inicial" value="Calendario" className="w-[130px]" />
        </div>
      </Group>
      <Group title="Formato" className="w-[222px] pr-[10px] pl-3">
        <div className="mt-[10px] flex items-center text-[11px]">
          <span className="flex w-[17px] flex-col items-end">
            <span className="text-[9px] leading-[9px] font-bold">$%</span>
            <svg width="12" height="10" viewBox="0 0 12 10"><path d="M1 9.500l1-4L7.500.5 10 2.500 4.500 8.500z" stroke="#1f7ac4" fill="#d9ecfa" /></svg>
          </span>
          <span className="ml-1 w-12">Formato</span>
          <Picker label="Formato" value="General" className="w-[130px]" />
        </div>
        <div className="mt-[6px] flex h-6 items-center text-[19px]">
          <button className="ml-1">$</button><ChevronDown size={9} strokeWidth={3} className="ml-1" />
          <button className="ml-1">%</button>
          <button aria-label="Separador de miles" className="ml-[11px]"><svg width="9" height="14" viewBox="0 0 9 14"><path d="M4.500 0a4 4 0 0 1 4 4c0 5-2.500 8-6 10l-.6-1C4 11.500 5 10 5 7.800A4 4 0 1 1 4.500 0z" fill="#333" /></svg></button>
          <button aria-label="Posiciones decimales" className="ml-[11px] flex flex-col items-end text-[9px] leading-[9px]">
            <span>.00</span>
            <span className="flex items-center"><svg width="8" height="7" viewBox="0 0 8 7"><path d="M0 3.500h7M4.500 1l2.500 2.500L4.500 6" stroke="#1f7ac4" fill="none" /></svg>.0</span>
          </button>
          <span className="ml-auto flex h-6 w-[72px] items-center rounded border border-[#c8c8c8] pr-0.5 pl-2">
            <input aria-label="Decimales" defaultValue="Autom..." className="w-[50px] text-[11px]" />
            <span className="ml-auto"><ChevronUp size={8} strokeWidth={3} /><ChevronDown size={8} strokeWidth={3} className="mt-[3px]" /></span>
          </span>
        </div>
      </Group>
      <Group title="Propiedades" className="w-[278px] pr-[11px] pl-[14px]">
        <div className="mt-[15px] flex items-center text-[11px]">
          <svg width="12" height="15" viewBox="0 0 12 15" fill="none" stroke="#333"><path d="M.5.5h11v14H.5zM.5 7.500h11M4 3v1.500h4V3M4 10v1.500h4V10" /></svg>
          <span className="ml-[6px] flex-1 whitespace-nowrap">Categoría de datos</span>
          <Picker label="Categoría de datos" value="Sin clasificar" className="w-[130px]" />
        </div>
      </Group>
      <Group title="Cálculos" className="w-[104px] px-[9px]">
        <div className="mt-[6px] flex gap-1 text-center text-[11px] leading-4">
          <button className="flex flex-col items-center"><CalculatorBig /><span className="mt-[5px]">Nueva<br />medida</span></button>
          <button className="flex flex-col items-center"><CalculatorBig quick /><span className="mt-[5px]">Medida<br />rápida</span></button>
        </div>
      </Group>
      <button aria-label="Contraer cinta" className="mr-2 mb-1 ml-auto self-end"><ChevronUp size={11} strokeWidth={3} /></button>
    </div>
  );
}

const C = { f: 'text-[#3165bb]', m: 'text-[#68349c]', b: 'text-[#319331]', p: 'text-[#0431fa]', n: 'text-[#098658]' };

function FormulaBar() {
  return (
    <div className="absolute top-1 right-[342px] left-[45px] flex items-start gap-[3px]">
      <div className="flex h-7 w-[76px] items-center justify-center gap-3 border border-[#ccc] bg-white">
        <button aria-label="Cancelar"><X size={20} strokeWidth={1.500} className="text-[#c4262e]" /></button>
        <button aria-label="Confirmar"><Check size={20} strokeWidth={1.200} className="text-[#aaa]" /></button>
      </div>
      <div className="flex h-[42px] flex-1 border border-[#ccc] bg-white">
        <code className="flex flex-1 pt-[3px] font-['DejaVu_Sans_Mono',monospace] text-[11px] leading-[18px] whitespace-pre text-black">
          <span className="w-[17px] pl-px text-[#237893]">1</span>
          <span>
            Diferencia % Beneficios = <span className={C.f}>DIVIDE</span><span className={C.p}>(</span><span className={C.b}>[</span><span className={C.m}>Beneficios AF Actuales Acumulados</span><span className={C.b}>]</span> - <span className={C.b}>[</span><span className={C.m}>Beneficios AF Anteriores Acumulados</span><span className={C.b}>]</span>, <span className={C.b}>[</span><span className={C.m}>Beneficios AF</span>
            <br /><span className={C.m}>Anteriores Acumulados</span><span className={C.b}>]</span>, <span className={C.n}>0</span><span className={C.p}>)</span>
          </span>
        </code>
        <div className="mt-0.5 flex w-[35px] border-l border-[#ddd]">
          <span className="mt-[16px] h-0.5 w-[13px] bg-[#444]" />
          <ChevronUp size={13} strokeWidth={1.500} className="mt-[7px] ml-[4px]" />
        </div>
      </div>
    </div>
  );
}

const CurvedArrow = ({ className }) => (
  <svg width="15" height="17" viewBox="0 0 15 17" fill="none" stroke="currentColor" strokeWidth="1.300" className={className}>
    <path d="M1 1v6h6M1 7l4.500-4C8 .8 11 .8 13 3c1.800 2.200 1.500 4.600 0 6.500L6 16.500" />
  </svg>
);

function PowerBi() {
  return (
    <section className="bg-[#f4f4f4] text-xs text-[#333]">
      <header className="flex h-9 items-center pr-[14px] pl-4">
        <Save size={17} strokeWidth={1.300} />
        <CurvedArrow className="ml-[15px]" />
        <CurvedArrow className="ml-[14px] -scale-x-100 text-[#aaa]" />
        <h1 className="mt-[5px] ml-[10px]">Sin título - Power BI Desktop</h1>
        <span className="ml-auto text-[11px]">Iniciar sesión</span>
        <span className="ml-[10px] flex h-5 w-5 items-center justify-center rounded-full bg-[#dedede]"><User size={14} strokeWidth={1.300} /></span>
        <button aria-label="Minimizar" className="ml-[31px]"><Minus size={13} strokeWidth={1.500} /></button>
        <button aria-label="Restaurar" className="ml-8"><Copy size={12} strokeWidth={1.500} className="-scale-x-100" /></button>
        <button aria-label="Cerrar" className="ml-8"><X size={16} strokeWidth={1.500} /></button>
      </header>
      <nav className="flex h-[34px] items-center gap-6 pr-[6px] pb-1 pl-[23px] text-[13px]">
        <button className="mr-[11px]">Archivo</button>
        {PBI_MENU.map((m) => <button key={m}>{m}</button>)}
        <button className="font-semibold text-[#117865]">Herramientas de tablas</button>
        <button className="border-b-2 border-[#117865] pt-[3px] pb-px font-semibold text-[#117865]">Herramientas de medición</button>
        <button className="ml-auto flex h-6 w-[107px] items-center justify-center gap-1 rounded bg-[#117865] text-[11px] font-semibold text-white"><Share size={15} strokeWidth={1.500} />Compartir<ChevronDown size={11} /></button>
      </nav>
      <Ribbon />
      <div className="relative flex h-[525px]">
        <nav className="flex w-[41px] flex-col items-center border-r border-[#eaeaea]">
          <button aria-label="Informe" className="flex h-10 w-full items-center justify-center border-l-[3px] border-[#117865]">
            <svg width="14" height="14" viewBox="0 0 14 14" fill="none" stroke="#222"><path d="M.5 0v13.500H14M3 13V6h2v7M7 13V3.500h2V13M11 13V1h2v12" /></svg>
          </button>
          <button aria-label="Tabla" className="flex h-10 items-center"><svg width="17" height="15" viewBox="0 0 17 15" fill="none" stroke="#333"><path d="M.5.5h16v14H.5zM.5 4h16M.5 7.500h16M.5 11h16M6 4v10.500M11 4v10.500" /></svg></button>
          <button aria-label="Modelo" className="flex h-10 items-center"><svg width="18" height="18" viewBox="0 0 18 18" fill="none" stroke="#333" strokeWidth="1.200"><path d="M.6 5.500h7v7h-7zM.6 8h7M10.500.6h7v6.500h-7zM10.500 3h7M10.500 10.500h7V17h-7zM10.500 13h7M4 5.500V2h6.500M4 12.500V15h6.500" /></svg></button>
          <button aria-label="DAX" className="flex h-10 items-center"><svg width="18" height="17" viewBox="0 0 18 17" fill="none" stroke="#333"><path d="M5 9V1h6l4 4v10h-2M11 1v4h4" /><text x="0" y="16" fontSize="7" fontWeight="bold" fill="#222" stroke="none">DAX</text></svg></button>
        </nav>
        <div className="flex min-w-0 flex-1 flex-col bg-white">
          <div className="flex flex-1">
            <div className="ml-[21px] flex flex-1 items-start border-x-2 border-dotted border-[#555] pl-[4px]">
              <div className="w-[386px] pt-[92px]"><MonthTable /><Slicer /></div>
              <div className="mt-[85px]"><BarChart /></div>
            </div>
            <span className="mt-[42px] mr-[3px] ml-[23px] w-2 rounded-b bg-[#c6c6c6]" />
            <span className="w-px bg-[#aaa]" />
          </div>
          <div className="flex h-[35px] items-center pl-[10px]">
            <button aria-label="Escritorio" className="flex h-full w-6 flex-col items-center border-b-0 pt-[6px]"><Monitor size={17} strokeWidth={1.500} /><span className="mt-[5px] h-[3px] w-6 rounded bg-[#117865]" /></button>
            <Smartphone size={18} strokeWidth={1.500} className="ml-[23px]" />
            <svg width="6" height="9" viewBox="0 0 6 9" className="ml-[18px]" fill="none" stroke="#888"><path d="M5.500.5v8l-5-4z" /></svg>
            <svg width="6" height="9" viewBox="0 0 6 9" className="ml-[15px]" fill="none" stroke="#888"><path d="M.5.5v8l5-4z" /></svg>
            <button className="ml-[7px] h-full w-[86px] border-b-4 border-l border-[#117865] border-l-[#999] pt-1 text-[11px] font-semibold">Página 1</button>
            <button aria-label="Nueva página" className="flex h-full w-[39px] items-center justify-center bg-[#117865] text-white"><Plus size={14} strokeWidth={4} /></button>
          </div>
        </div>
        <aside className="flex w-8 flex-col items-center bg-white pt-[44px]">
          <svg width="9" height="7" viewBox="0 0 9 7" stroke="#333"><path d="M0 .5h9M2 3.500h7M5 6.500h4" /></svg>
          <h2 className="mt-2 text-[14px] font-semibold text-[#222] [writing-mode:vertical-rl]">Filtros</h2>
        </aside>
        <aside className="flex w-[35px] flex-col items-center border-l border-[#c8c8c8] pt-3">
          <ChevronsLeft size={14} strokeWidth={2.500} />
          <h2 className="mt-[13px] text-[14px] font-semibold text-[#222] [writing-mode:vertical-rl]">Visualizaciones</h2>
        </aside>
        <DataPane />
        <FormulaBar />
      </div>
      <footer className="flex h-[25px] items-center border-t border-b-2 border-[#c8c8c8] border-b-black pr-[19px] pl-1">
        <span className="text-[11px]">Página 1 de 1</span>
        <Minus size={7} strokeWidth={3} className="ml-auto" />
        <input type="range" aria-label="Zoom del informe" defaultValue="34" className="mx-1 h-px w-[100px] appearance-none bg-[#444] [&::-webkit-slider-thumb]:h-3 [&::-webkit-slider-thumb]:w-1 [&::-webkit-slider-thumb]:appearance-none [&::-webkit-slider-thumb]:bg-[#333]" />
        <Plus size={10} className="ml-0.5" />
        <span className="mr-4 ml-3">70 %</span>
        <svg width="14" height="11" viewBox="0 0 14 11" fill="none" stroke="#333"><rect x=".5" y=".5" width="13" height="10" rx="1.500" /><path d="M3 4.500V3h2M11 4.500V3H9M3 6.500V8h2M11 6.500V8H9" /></svg>
      </footer>
    </section>
  );
}

export default function App() {
  return (
    <main className="flex min-h-screen items-start overflow-hidden bg-white font-['Open_Sans','Noto_Sans',sans-serif]">
      <div className="mt-[145px] w-1/2 min-w-0">
        <Excel />
        <TaskBar />
      </div>
      <div className="w-1/2 min-w-0">
        <PowerBi />
        <TaskBar tray />
      </div>
    </main>
  );
}
